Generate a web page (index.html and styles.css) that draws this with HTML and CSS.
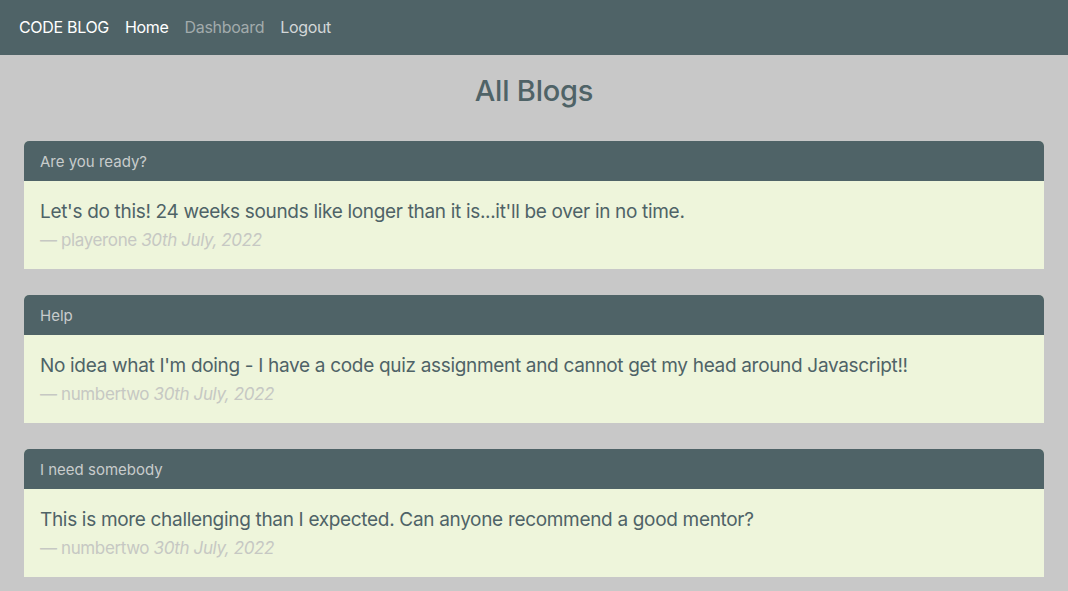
FILE: index.html
```html
<!DOCTYPE html>
<html lang="en">
<head>
<meta charset="utf-8">
<title>CODE BLOG</title>
<link rel="stylesheet" href="styles.css">
</head>
<body>
<nav class="navbar">
  <a class="brand" href="#">CODE BLOG</a>
  <a class="nav-link active" href="#">Home</a>
  <a class="nav-link muted" href="#">Dashboard</a>
  <a class="nav-link" href="#">Logout</a>
</nav>
<main class="container">
  <h2 class="page-title">All Blogs</h2>
  <article class="card">
    <div class="card-header">Are you ready?</div>
    <div class="card-body">
      <p class="post-text">Let's do this! 24 weeks sounds like longer than it is...it'll be over in no time.</p>
      <p class="post-footer">— playerone <em>30th July, 2022</em></p>
    </div>
  </article>
  <article class="card">
    <div class="card-header">Help</div>
    <div class="card-body">
      <p class="post-text">No idea what I'm doing - I have a code quiz assignment and cannot get my head around Javascript!!</p>
      <p class="post-footer">— numbertwo <em>30th July, 2022</em></p>
    </div>
  </article>
  <article class="card">
    <div class="card-header">I need somebody</div>
    <div class="card-body">
      <p class="post-text">This is more challenging than I expected. Can anyone recommend a good mentor?</p>
      <p class="post-footer">— numbertwo <em>30th July, 2022</em></p>
    </div>
  </article>
</main>
</body>
</html>
```
FILE: styles.css
```css
* { box-sizing: border-box; }
html, body { margin: 0; padding: 0; }
body {
  background: #c8c8c8;
  font-family: Inter, "Liberation Sans", sans-serif;
  color: #4f6367;
  font-size: 16px;
  line-height: 1.5;
}
a { text-decoration: none; }
.navbar {
  height: 55px;
  background: #4f6367;
  display: flex;
  align-items: center;
  padding: 0 19px 2px;
  letter-spacing: -0.32px;
}
.brand {
  color: #ffffff;
  font-size: 16px;
  margin-right: 8px;
}
.nav-link {
  color: #d3d7d8;
  font-size: 16px;
  padding: 0 8px;
}
.nav-link.active { color: #ffffff; }
.nav-link.muted { color: #a2abac; }
.container {
  padding: 0 24px;
}
.page-title {
  margin: 18px 0 0;
  height: 68px;
  text-align: center;
  font-size: 29px;
  font-weight: 500;
  line-height: 36px;
  letter-spacing: -0.2px;
}
.card {
  border-radius: 5px 5px 0 0;
  overflow: hidden;
  margin-bottom: 26px;
  background: #eef5db;
}
.card-header {
  background: #4f6367;
  color: #c8cccc;
  font-size: 15px;
  padding: 9px 16px 7px;
  line-height: 24px;
}
.card-body {
  padding: 16px;
}
.post-text {
  margin: 0;
  font-size: 19px;
  line-height: 30px;
  letter-spacing: -0.32px;
}
.post-footer {
  margin: 0;
  font-size: 17px;
  line-height: 26px;
  color: #c6c8c3;
  letter-spacing: -0.38px;
}
.post-footer em { font-style: italic; }
```
